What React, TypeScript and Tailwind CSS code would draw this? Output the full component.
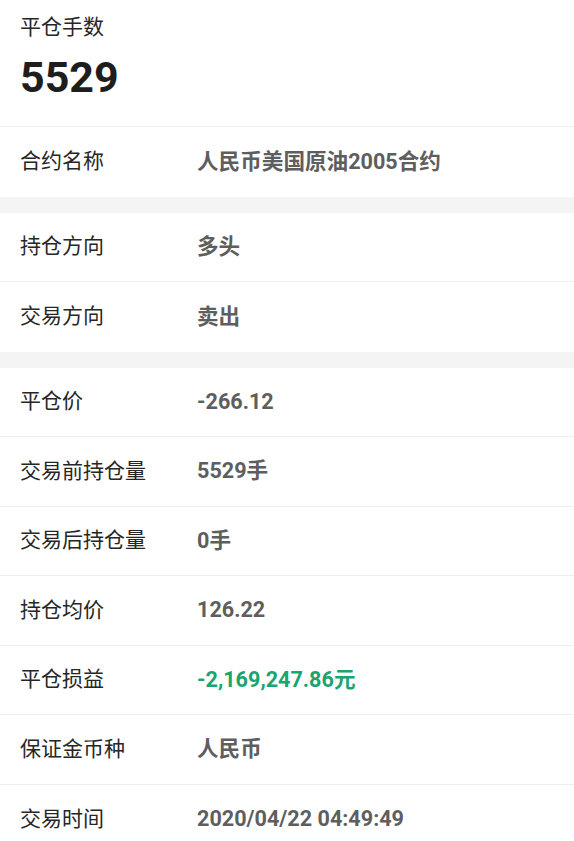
const FONT = "font-['Roboto','Noto_Sans_CJK_SC',sans-serif]"

type Row = { label: string; value: string; green?: boolean }

const GROUPS: Row[][] = [
  [{ label: '合约名称', value: '人民币美国原油2005合约' }],
  [
    { label: '持仓方向', value: '多头' },
    { label: '交易方向', value: '卖出' },
  ],
  [
    { label: '平仓价', value: '-266.12' },
    { label: '交易前持仓量', value: '5529手' },
    { label: '交易后持仓量', value: '0手' },
    { label: '持仓均价', value: '126.22' },
    { label: '平仓损益', value: '-2,169,247.86元', green: true },
    { label: '保证金币种', value: '人民币' },
    { label: '交易时间', value: '2020/04/22 04:49:49' },
  ],
]

function InfoRow({ row, last }: { row: Row; last: boolean }) {
  return (
    <div className={`flex items-center h-[69.5px] px-5 ${last ? '' : 'border-b border-[#efefef]'}`}>
      <div className="w-[177px] text-[21px] text-[#262626]">{row.label}</div>
      <div className={`text-[21.6px] font-bold ${row.green ? 'text-[#1ba46f]' : 'text-[#5e5e5e]'}`}>
        {row.value}
      </div>
    </div>
  )
}

export default function App() {
  return (
    <div className={`${FONT} w-[574px] h-[841px] overflow-hidden bg-white`}>
      {/* Header */}
      <div className="h-[127px] px-5 pt-[13px] border-b border-[#efefef]">
        <div className="text-[21px] leading-[28px] text-[#262626]">平仓手数</div>
        <div className="mt-[8px] text-[43px] leading-[56px] font-bold text-[#1e1e1e]">5529</div>
      </div>

      {GROUPS.map((group, gi) => (
        <div key={gi}>
          {gi > 0 && <div className="h-[16px] bg-[#f4f4f4]" />}
          {group.map((row, ri) => (
            <InfoRow key={row.label} row={row} last={ri === group.length - 1} />
          ))}
        </div>
      ))}
    </div>
  )
}
